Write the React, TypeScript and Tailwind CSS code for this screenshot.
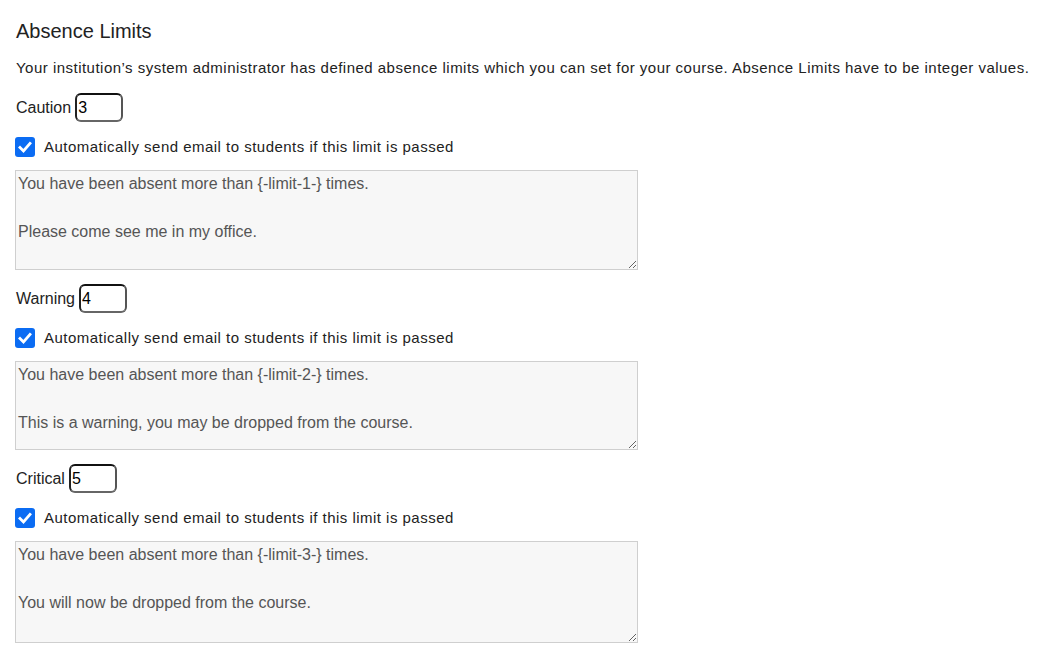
import React from "react";

const limits = [
  { label: "Caution", value: "3", n: 1, msg: "Please come see me in my office.", h: "h-[100px]" },
  { label: "Warning", value: "4", n: 2, msg: "This is a warning, you may be dropped from the course.", h: "h-[89px]" },
  { label: "Critical", value: "5", n: 3, msg: "You will now be dropped from the course.", h: "h-[102px]" },
];

function Check() {
  return (
    <span className="flex h-[20px] w-[20px] items-center justify-center rounded-[3px] bg-[#0b6cf3]">
      <svg width="14" height="14" viewBox="0 0 14 14">
        <path d="M2 7.5 L5.5 11 L12 3.5" fill="none" stroke="white" strokeWidth="2.8" strokeLinecap="square" />
      </svg>
    </span>
  );
}

export default function App() {
  return (
    <div className="min-h-[668px] w-[1046px] bg-white px-[16px] pt-[20px] text-[#222]" style={{ fontFamily: '"Liberation Sans", Arial, sans-serif' }}>
      <h1 className="text-[20px] leading-[22px] text-[#222]">Absence Limits</h1>
      <p className="mt-[17px] whitespace-nowrap text-[15px] leading-[18px] tracking-[0.48px] text-[#222]">
        Your institution’s system administrator has defined absence limits which you can set for your course. Absence Limits have to be integer values.
      </p>
      {limits.map((l, i) => (
        <div key={l.label} className={i === 0 ? "mt-[16px]" : "mt-[14px]"}>
          <div className="flex items-center text-[16px]">
            <span>{l.label}</span>
            <input
              readOnly
              value={l.value}
              className="ml-[4px] h-[29px] w-[48px] rounded-[6px] border-2 border-t-[#111] border-l-[#222] border-r-[#555] border-b-[#666] px-[1px] text-[16px] text-black outline-none"
              style={{ fontFamily: '"Liberation Sans", Arial, sans-serif' }}
            />
          </div>
          <div className="mt-[15px] flex items-center">
            <div className="-ml-[1px]"><Check /></div>
            <span className="ml-[9px] whitespace-nowrap text-[15px] leading-[18px] tracking-[0.48px] text-[#222]">
              Automatically send email to students if this limit is passed
            </span>
          </div>
          <textarea
            readOnly
            className={`-ml-[1px] mt-[13px] block w-[623px] ${l.h} border border-[#cfcfcf] bg-[#f7f7f7] px-[2px] pt-[1px] text-[16px] leading-[24px] text-[#555] outline-none`}
            style={{ fontFamily: '"Liberation Sans", Arial, sans-serif', resize: "both" }}
            value={`You have been absent more than {-limit-${l.n}-} times.\n\n${l.msg}`}
          />
        </div>
      ))}
    </div>
  );
}
